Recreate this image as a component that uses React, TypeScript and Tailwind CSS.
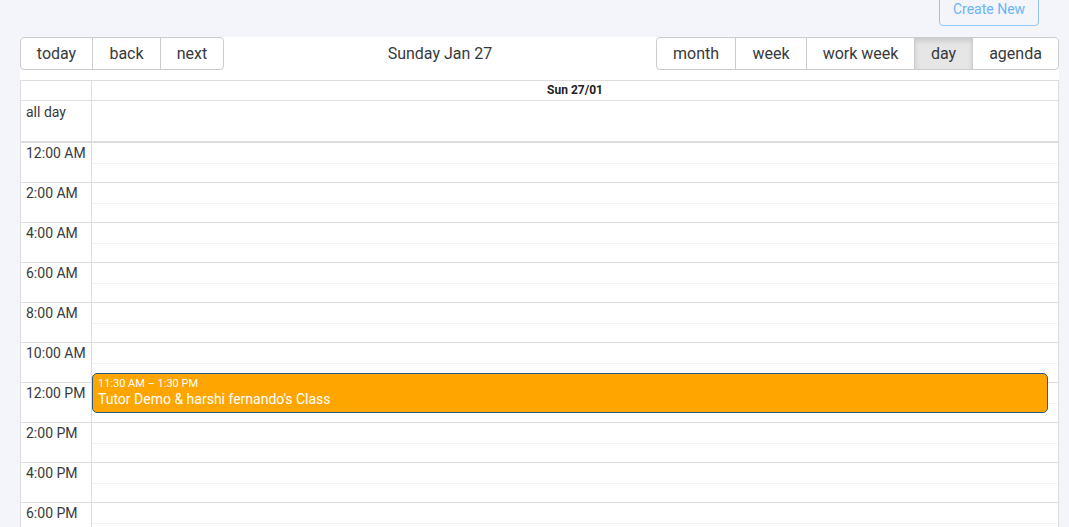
import React from 'react';

const leftButtons = [
  { label: 'today', w: 'w-[73px]' },
  { label: 'back', w: 'w-[69px]' },
  { label: 'next', w: 'w-[64px]' },
];

const viewButtons = [
  { label: 'month', w: 'w-[80px]', active: false },
  { label: 'week', w: 'w-[72px]', active: false },
  { label: 'work week', w: 'w-[109px]', active: false },
  { label: 'day', w: 'w-[59px]', active: true },
  { label: 'agenda', w: 'w-[87px]', active: false },
];

const hours = [
  '12:00 AM', '2:00 AM', '4:00 AM', '6:00 AM', '8:00 AM', '10:00 AM',
  '12:00 PM', '2:00 PM', '4:00 PM', '6:00 PM', '8:00 PM', '10:00 PM',
];

const App: React.FC = () => {
  return (
    <div className="h-screen overflow-hidden bg-[#f4f5fa] text-[#373a3c] font-['Roboto',sans-serif]">
      <div className="flex justify-end h-[37px] pr-[30px]">
        <button className="-mt-[8px] h-[34px] w-[100px] rounded-[4px] border border-[#90c8f8] bg-transparent text-[14px] text-[#6ab4f5] pt-[1px]">
          Create New
        </button>
      </div>

      <div className="mx-[20px] w-[1039px] bg-white">
        <div className="flex items-center h-[33px] mb-[10px]">
          <div className="flex">
            {leftButtons.map((b, i) => (
              <button
                key={b.label}
                className={`${b.w} h-[33px] border border-[#ccc] text-[16px] ${i > 0 ? '-ml-px' : ''} ${i === 0 ? 'rounded-l-[4px]' : ''} ${i === leftButtons.length - 1 ? 'rounded-r-[4px]' : ''}`}
              >
                {b.label}
              </button>
            ))}
          </div>
          <div className="flex-1 text-center text-[16px]">Sunday Jan 27</div>
          <div className="flex">
            {viewButtons.map((b, i) => (
              <button
                key={b.label}
                className={`${b.w} h-[33px] border border-[#ccc] text-[16px] whitespace-nowrap ${i > 0 ? '-ml-px' : ''} ${i === 0 ? 'rounded-l-[4px]' : ''} ${i === viewButtons.length - 1 ? 'rounded-r-[4px]' : ''} ${b.active ? 'bg-[#e6e6e6] border-[#adadad] shadow-[inset_0_3px_5px_rgba(0,0,0,0.125)]' : ''}`}
              >
                {b.label}
              </button>
            ))}
          </div>
        </div>

        <div className="border border-[#ddd]">
          <div className="flex border-b-2 border-[#ddd]">
            <div className="w-[71px] shrink-0 border-r border-[#ddd]">
              <div className="h-[20px] border-b border-[#ddd]" />
              <div className="h-[40px] px-[5px] pt-[1px] text-[14px]">all day</div>
            </div>
            <div className="flex-1">
              <div className="h-[20px] border-b border-[#ddd] text-center text-[12px] font-bold leading-[19px] text-[#222]">
                Sun 27/01
              </div>
              <div className="h-[40px]" />
            </div>
          </div>

          <div className="flex">
            <div className="w-[71px] shrink-0 border-r border-[#ddd]">
              {hours.map((h) => (
                <div key={h} className="h-[40px] border-b border-[#ddd] px-[5px] pt-[2px] text-[14px] leading-[16px] whitespace-nowrap">
                  {h}
                </div>
              ))}
            </div>
            <div className="relative flex-1">
              {hours.map((h) => (
                <div key={h} className="h-[40px] border-b border-[#ddd]">
                  <div className="h-[20px]" />
                  <div className="h-[19px] border-t border-[#f2f2f2]" />
                </div>
              ))}
              <div className="absolute left-0 right-[10px] top-[230px] h-[40px] rounded-[5px] border border-[#265985] bg-[#ffa500] px-[5px] pt-[3px] text-white">
                <div className="text-[11px] leading-[14px]">11:30 AM – 1:30 PM</div>
                <div className="text-[14px] leading-[17px]">Tutor Demo &amp; harshi fernando's Class</div>
              </div>
            </div>
          </div>
        </div>
      </div>
    </div>
  );
};

export default App;
